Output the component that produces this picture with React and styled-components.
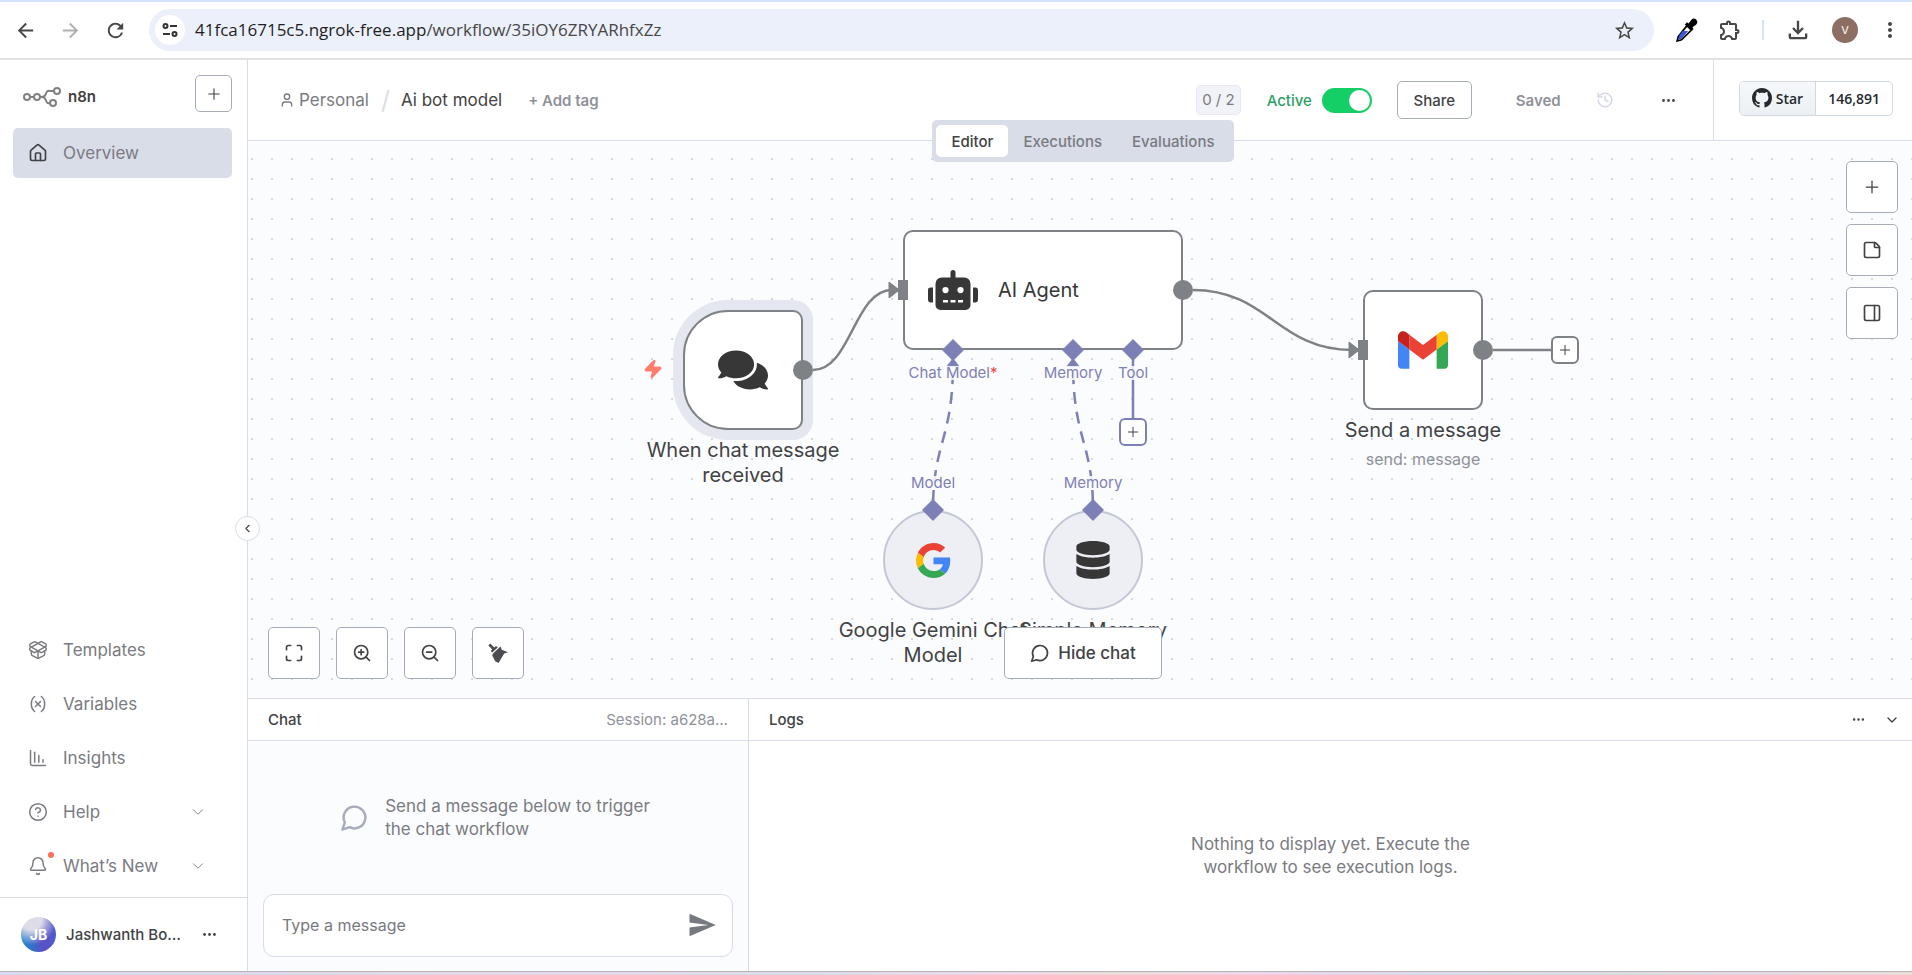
import React from 'react';
import styled, { createGlobalStyle } from 'styled-components';
import {
  House, PackageOpen, Variable, ChartColumnDecreasing, CircleQuestionMark, Bell, ChevronDown, ChevronLeft,
  Plus, User, History, StickyNote, PanelRight, Maximize, ZoomIn, ZoomOut, Ellipsis, Zap,
} from 'lucide-react';
import { FaRobot, FaComments, FaDatabase } from 'react-icons/fa';
import {
  MdArrowBack, MdArrowForward, MdRefresh, MdStarBorder, MdOutlineExtension, MdOutlineFileDownload, MdMoreVert, MdSend,
} from 'react-icons/md';

const c = {
  text: '#414244',
  soft: '#7a7b81',
  mute: '#8f9199',
  line: '#d9dce8',
  control: '#a6acba',
  edge: '#7e8186',
  purple: '#7d80b5',
  canvas: '#fbfcfe',
};

const Global = createGlobalStyle`
  *, *::before, *::after { box-sizing: border-box; }
  body { margin: 0; background: #fff; color: ${c.text}; font-family: Inter, "Liberation Sans", sans-serif; }
  button, input { font: inherit; color: inherit; }
  button { cursor: pointer; padding: 0; border: 0; background: none; }
  a { color: inherit; text-decoration: none; }
  h1, h2, p { margin: 0; font-weight: inherit; font-size: inherit; }
  svg { flex: none; display: block; }
`;

const Page = styled.div`
  min-height: 100vh;
  display: flex;
  flex-direction: column;
`;

/* Browser bar */
const BrowserTop = styled.div`
  height: 2px;
  background: #d3e3fd;
`;
const BrowserBar = styled.header`
  height: 58px;
  display: flex;
  align-items: center;
  gap: 22px;
  padding: 0 10px 0 14px;
  border-bottom: 2px solid #e1e1e1;
  color: #474747;
`;
const NavButtons = styled.nav`
  display: flex;
  gap: 22px;
`;
const IconButton = styled.button`
  display: flex;
  align-items: center;
  justify-content: center;
  color: ${(p) => p.$color || 'inherit'};
`;
const AddressBar = styled.div`
  flex: 1;
  height: 42px;
  display: flex;
  align-items: center;
  gap: 10px;
  padding: 0 18px 0 6px;
  border-radius: 21px;
  background: #ecf0fa;
`;
const SiteInfo = styled.button`
  width: 30px;
  height: 30px;
  display: grid;
  place-items: center;
  border-radius: 50%;
  background: #fff;
`;
const Url = styled.div`
  flex: 1;
  font: 17px/24px "Open Sans", "Noto Sans", sans-serif;
  color: #474747;
  b { font-weight: 400; color: #1f1f1f; }
`;
const BrowserTools = styled.div`
  display: flex;
  align-items: center;
  gap: 20px;
`;
const ToolRule = styled.span`
  width: 2px;
  height: 20px;
  background: #d3e3fd;
`;
const Profile = styled.button`
  width: 26px;
  height: 26px;
  border-radius: 50%;
  background: #8d6e63;
  color: #fff;
  font-size: 11px;
`;

/* Shell */
const Shell = styled.div`
  flex: 1;
  display: flex;
  position: relative;
`;
const Sidebar = styled.aside`
  width: 248px;
  flex: none;
  display: flex;
  flex-direction: column;
  border-right: 1px solid ${c.line};
`;
const SideTop = styled.div`
  display: flex;
  align-items: center;
  justify-content: space-between;
  padding: 15px 15px 16px 23px;
`;
const Brand = styled.a`
  display: flex;
  align-items: center;
  gap: 7px;
  padding-top: 6px;
  font-size: 15px;
  font-weight: 600;
`;
const AddButton = styled.button`
  width: 37px;
  height: 37px;
  display: grid;
  place-items: center;
  border: 1px solid ${c.control};
  border-radius: 5px;
`;
const Menu = styled.nav`
  display: flex;
  flex-direction: column;
  gap: 4px;
  margin-top: ${(p) => (p.$bottom ? 'auto' : '0')};
  padding: 0 15px 6px 13px;
`;
const MenuItem = styled.a`
  height: 50px;
  display: flex;
  align-items: center;
  gap: 15px;
  padding: 0 25px 0 15px;
  border-radius: 5px;
  background: ${(p) => (p.$active ? '#d9dde8' : 'transparent')};
  color: ${c.soft};
  font-size: 17px;
  > svg:first-child { color: ${(p) => (p.$active ? c.text : 'inherit')}; }
  span { flex: 1; }
`;
const BellWrap = styled.i`
  position: relative;
  &::after {
    content: '';
    position: absolute;
    top: -4px;
    right: -6px;
    width: 6px;
    height: 6px;
    border-radius: 50%;
    background: #ff6d5a;
  }
`;
const Account = styled.div`
  height: 74px;
  display: flex;
  align-items: center;
  gap: 10px;
  padding: 0 29px 0 21px;
  border-top: 1px solid ${c.line};
  font-size: 15px;
  font-weight: 500;
`;
const Avatar = styled.span`
  width: 35px;
  height: 35px;
  display: grid;
  place-items: center;
  border-radius: 50%;
  background: radial-gradient(circle at 30% 8%, #dedce8 25%, transparent 62%), linear-gradient(80deg, #1f82cf 15%, #5c4fc4 55%, #4a5fd0);
  color: #fff;
  font-size: 14px;
  font-weight: 700;
`;
const AccountName = styled.span`
  flex: 1;
  white-space: nowrap;
`;
const Collapse = styled.button`
  position: absolute;
  left: 235px;
  top: 456px;
  z-index: 2;
  width: 25px;
  height: 25px;
  display: grid;
  place-items: center;
  border: 1px solid ${c.line};
  border-radius: 50%;
  background: #fff;
`;

const Main = styled.main`
  flex: 1;
  min-width: 0;
  display: flex;
  flex-direction: column;
`;

/* Workflow header */
const Header = styled.header`
  height: 81px;
  display: flex;
  position: relative;
  z-index: 1;
  border-bottom: 1px solid ${c.line};
`;
const HeaderMain = styled.div`
  flex: 1;
  display: flex;
  align-items: center;
  padding: 0 36px 0 31px;
`;
const Crumbs = styled.div`
  flex: 1;
  display: flex;
  align-items: center;
  font-size: 17px;
`;
const CrumbLink = styled.a`
  display: flex;
  align-items: center;
  gap: 4px;
  color: ${c.soft};
`;
const Slash = styled.span`
  padding: 0 11px 0 12px;
  color: ${c.line};
  font-size: 25px;
  line-height: 28px;
`;
const AddTag = styled.button`
  margin-left: 26px;
  color: ${c.mute};
  font-size: 15px;
  font-weight: 600;
`;
const Actions = styled.div`
  display: flex;
  align-items: center;
  font-size: 15px;
`;
const Count = styled.span`
  height: 30px;
  padding: 0 5px;
  border: 1px solid #e6e9f2;
  border-radius: 5px;
  background: #f1f3f9;
  color: ${c.soft};
  font-size: 15px;
  line-height: 28px;
`;
const Active = styled.label`
  display: flex;
  align-items: center;
  gap: 10px;
  margin: 0 25px 0 26px;
  color: #2c9f66;
  font-weight: 500;
`;
const Switch = styled.input`
  appearance: none;
  width: 50px;
  height: 25px;
  margin: 0;
  padding: 2px;
  border-radius: 13px;
  background: #14cf66;
  &::after {
    content: '';
    display: block;
    width: 21px;
    height: 21px;
    margin-left: auto;
    border-radius: 50%;
    background: #fff;
  }
`;
const Share = styled.button`
  width: 75px;
  height: 38px;
  border: 1px solid ${c.control};
  border-radius: 5px;
  font-weight: 500;
`;
const Saved = styled.span`
  margin: 0 35px 0 44px;
  color: ${c.mute};
  font-weight: 600;
`;
const HistoryButton = styled(IconButton)`
  margin-right: 46px;
  color: #d5d9e6;
`;
const GithubArea = styled.div`
  display: flex;
  align-items: center;
  padding: 0 19px 4px 25px;
  border-left: 1px solid ${c.line};
`;
const Github = styled.a`
  height: 35px;
  display: flex;
  border: 1px solid #d1d9e0;
  border-radius: 5px;
  color: #25292e;
  font: 600 14px/33px "Open Sans", "Noto Sans", sans-serif;
  overflow: hidden;
`;
const GithubPart = styled.span`
  display: flex;
  align-items: center;
  gap: 4px;
  padding: 0 12px;
  &:first-child { border-right: 1px solid #d1d9e0; background: linear-gradient(#f6f8fa, #ebf0f4); }
`;
const Tabs = styled.div`
  position: absolute;
  left: 6px;
  right: 0;
  top: 60px;
  display: flex;
  justify-content: center;
  pointer-events: none;
`;
const TabList = styled.div`
  display: flex;
  padding: 5px 4px;
  border-radius: 5px;
  background: #d9dde8;
  pointer-events: auto;
`;
const Tab = styled.button`
  height: 32px;
  padding: 0 15px;
  border-radius: 5px;
  background: ${(p) => (p.$on ? '#fff' : 'transparent')};
  color: ${(p) => (p.$on ? c.text : c.soft)};
  font-size: 15px;
  font-weight: 500;
`;

/* Canvas */
const Canvas = styled.section`
  flex: 1;
  min-height: 557px;
  position: relative;
  overflow: hidden;
  background: radial-gradient(circle at 50% 50%, #d6d7db 1px, transparent 1px) -6px 8px / 20px 20px ${c.canvas};
`;
const Edges = styled.svg`
  position: absolute;
  left: 0;
  top: 0;
`;
const Node = styled.article`
  position: absolute;
  left: ${(p) => p.$x}px;
  top: ${(p) => p.$y}px;
  width: ${(p) => p.$w || 120}px;
  height: ${(p) => p.$h || 120}px;
  display: flex;
  align-items: center;
  justify-content: ${(p) => (p.$wide ? 'flex-start' : 'center')};
  gap: 20px;
  padding-left: ${(p) => (p.$wide ? '23px' : '0')};
  border: 2px solid ${(p) => (p.$round ? '#c3c8d7' : c.edge)};
  border-radius: ${(p) => (p.$round ? '50%' : p.$trigger ? '45px 10px 10px 45px' : '10px')};
  background: ${(p) => (p.$round ? '#eeeff5' : '#fff')};
  box-shadow: ${(p) => (p.$trigger ? '0 0 0 10px #e4e7ef' : 'none')};
  color: #373737;
  font-size: 20px;
`;
const Caption = styled.div`
  position: absolute;
  left: ${(p) => p.$x - 110}px;
  top: ${(p) => p.$y}px;
  width: 220px;
  font-size: 20px;
  line-height: 25px;
  text-align: center;
  small { display: block; margin-top: 4px; color: ${c.mute}; font-size: 16px; line-height: 24px; font-weight: 400; }
`;
const Port = styled.span`
  position: absolute;
  left: ${(p) => p.$x - 60}px;
  top: ${(p) => p.$y - 9}px;
  width: 120px;
  display: flex;
  justify-content: center;
  color: ${c.purple};
  font-size: 15px;
  line-height: 18px;
  span { background: rgba(251, 252, 254, 0.85); line-height: 14px; margin: 2px 0; }
  em { font-style: normal; color: #f0413f; }
`;
const PlusNode = styled.button`
  position: absolute;
  left: ${(p) => p.$x}px;
  top: ${(p) => p.$y}px;
  width: 28px;
  height: 28px;
  display: grid;
  place-items: center;
  border: 2px solid ${(p) => p.$color};
  border-radius: 6px;
  background: #fff;
`;
const BoltMark = styled.span`
  position: absolute;
  left: 395px;
  top: 218px;
  color: #ff7c6c;
`;
const ControlBar = styled.div`
  position: absolute;
  left: 20px;
  bottom: 19px;
  display: flex;
  gap: 16px;
`;
const SideControls = styled.div`
  position: absolute;
  right: 14px;
  top: 20px;
  display: flex;
  flex-direction: column;
  gap: 11px;
`;
const SquareButton = styled.button`
  width: 52px;
  height: 52px;
  display: grid;
  place-items: center;
  border: 1px solid ${c.control};
  border-radius: 5px;
  background: #fff;
`;
const HideChatRow = styled.div`
  position: absolute;
  left: 6px;
  right: 0;
  bottom: 19px;
  display: flex;
  justify-content: center;
  pointer-events: none;
`;
const HideChat = styled.button`
  height: 52px;
  display: flex;
  align-items: center;
  gap: 8px;
  padding: 0 25px;
  border: 1px solid ${c.control};
  border-radius: 5px;
  background: #fff;
  font-size: 17px;
  font-weight: 500;
  pointer-events: auto;
`;

/* Bottom panels */
const Panels = styled.section`
  min-height: 273px;
  display: flex;
  border-top: 1px solid ${c.line};
`;
const ChatPanel = styled.div`
  width: 501px;
  flex: none;
  display: flex;
  flex-direction: column;
  border-right: 1px solid ${c.line};
  background: ${c.canvas};
`;
const LogPanel = styled.div`
  flex: 1;
  display: flex;
  flex-direction: column;
`;
const PanelHead = styled.header`
  height: 42px;
  display: flex;
  align-items: center;
  gap: 18px;
  padding: 0 12px 0 20px;
  border-bottom: 1px solid ${c.line};
  background: #fff;
  font-size: 15px;
  font-weight: 500;
  h2 { flex: 1; }
`;
const Session = styled.span`
  padding-right: 8px;
  color: ${c.mute};
  font-weight: 400;
`;
const Hint = styled.div`
  flex: 1;
  display: flex;
  align-items: center;
  justify-content: center;
  gap: 16px;
  padding-right: ${(p) => (p.$center ? '0' : '6px')};
  color: ${c.soft};
  font-size: 17px;
  line-height: 23px;
  text-align: ${(p) => (p.$center ? 'center' : 'left')};
  > svg { color: ${c.control}; }
`;
const Composer = styled.form`
  height: 63px;
  display: flex;
  align-items: center;
  margin: 0 15px 14px;
  padding: 0 15px 2px 18px;
  border: 1px solid ${c.line};
  border-radius: 11px;
  background: #fff;
  color: #777980;
`;
const MessageInput = styled.input`
  flex: 1;
  border: 0;
  outline: 0;
  padding: 0;
  background: none;
  font-size: 16px;
  &::placeholder { color: #777980; }
`;
const BottomStrip = styled.div`
  height: 4px;
  border-top: 1px solid #b4b4b8;
  background: linear-gradient(90deg, #d8d9ee, #e4d8ea 30%, #dcdcec 42%, #efd6e8 53%, #ecdcd8 58%, #efd4ea 66%, #dcdaee 75%, #dcdce0 85%, #e6d8e4 93%, #ecdcd8);
`;

const ChatIcon = ({ size }) => (
  <svg width={size} height={size} viewBox="0 0 24 24" fill="none" stroke="currentColor" strokeWidth="2" strokeLinecap="round" strokeLinejoin="round">
    <path d="M7.9 20A9 9 0 1 0 4 16.1L2 22Z" />
  </svg>
);
const N8nLogo = () => (
  <svg width="38" height="21" viewBox="0 0 38 21" fill="none" stroke="#808080" strokeWidth="2">
    <circle cx="4" cy="11" r="3" /><circle cx="14" cy="11" r="3" />
    <circle cx="34" cy="5" r="3" /><circle cx="30" cy="17" r="3" />
    <path d="M7 11h4M17 11h2q3 0 4-3.500t4-2.500h4M19 11q3 0 4 3.500t4 2.500" />
  </svg>
);
const SiteIcon = () => (
  <svg width="16" height="16" viewBox="0 0 16 16" fill="none" stroke="#333" strokeWidth="2">
    <circle cx="3.5" cy="4" r="2" /><path d="M8 4h7M1 12h7" /><circle cx="12.5" cy="12" r="2" />
  </svg>
);
const GithubMark = () => (
  <svg width="20" height="20" viewBox="0 0 16 16" fill="currentColor">
    <path d="M8 0c4.420 0 8 3.580 8 8a8.013 8.013 0 0 1-5.450 7.590c-.4.080-.55-.17-.55-.38 0-.27.010-1.130.010-2.200 0-.75-.25-1.230-.54-1.480 1.780-.2 3.650-.88 3.650-3.950 0-.88-.31-1.590-.82-2.150.080-.2.360-1.020-.080-2.120 0 0-.67-.22-2.200.82-.64-.18-1.320-.27-2-.27-.68 0-1.360.090-2 .27-1.530-1.030-2.200-.82-2.200-.82-.44 1.100-.16 1.920-.080 2.120-.51.560-.82 1.280-.82 2.150 0 3.060 1.860 3.750 3.640 3.950-.23.200-.44.550-.51 1.070-.46.210-1.610.550-2.330-.66-.15-.24-.6-.83-1.230-.82-.67.010-.27.380.010.530.34.190.730.900.820 1.130.16.450.68 1.310 2.690.940 0 .67.010 1.300.010 1.490 0 .21-.15.450-.55.380A7.995 7.995 0 0 1 0 8c0-4.420 3.580-8 8-8Z" />
  </svg>
);
const Dropper = () => (
  <svg width="22" height="24" viewBox="0 0 20 22">
    <path d="M10 7l4 4-9 9-4 1 1-4z" fill="#fff" stroke="#000" strokeWidth="1.6" />
    <path d="M6 12h5l-6 7-3 1 1-4z" fill="#3c55d8" />
    <path d="M8 6l2-2 1.500 1 2.500-3.500q2.500-2 4.500 0t0 4.500l-3.500 2.500 1 1.500L14 12z" fill="#000" />
  </svg>
);
const GmailIcon = () => (
  <svg width="50" height="38" viewBox="52 42 88 66">
    <path fill="#4285f4" d="M58 108h14V74L52 59v43c0 3.320 2.690 6 6 6" />
    <path fill="#34a853" d="M120 108h14c3.320 0 6-2.690 6-6V59l-20 15" />
    <path fill="#fbbc04" d="M120 48v26l20-15v-8c0-7.420-8.470-11.650-14.400-7.200" />
    <path fill="#ea4335" d="M72 74V48l24 18 24-18v26L96 92" />
    <path fill="#c5221f" d="M52 51v8l20 15V48l-5.600-4.200c-5.940-4.450-14.400-.22-14.400 7.200" />
  </svg>
);
const GoogleIcon = () => (
  <svg width="35" height="35" viewBox="0 0 48 48">
    <path fill="#ea4335" d="M24 9.500c3.540 0 6.710 1.220 9.210 3.600l6.850-6.850C35.900 2.380 30.470 0 24 0 14.620 0 6.510 5.380 2.560 13.220l7.980 6.190C12.430 13.720 17.740 9.500 24 9.500z" />
    <path fill="#4285f4" d="M46.980 24.550c0-1.570-.15-3.090-.38-4.550H24v9.020h12.940c-.58 2.960-2.260 5.480-4.780 7.180l7.730 6c4.510-4.180 7.090-10.360 7.090-17.650z" />
    <path fill="#fbbc05" d="M10.530 28.590c-.48-1.450-.76-2.990-.76-4.590s.27-3.140.76-4.590l-7.980-6.190C.92 16.460 0 20.120 0 24c0 3.880.92 7.540 2.560 10.780l7.970-6.190z" />
    <path fill="#34a853" d="M24 48c6.480 0 11.930-2.130 15.890-5.810l-7.730-6c-2.150 1.450-4.920 2.300-8.160 2.300-6.260 0-11.570-4.220-13.470-9.910l-7.980 6.190C6.510 42.620 14.620 48 24 48z" />
  </svg>
);
const Broom = () => (
  <svg width="20" height="20" viewBox="0 0 20 20" fill="#4c4d50">
    <path d="M2.200.6L6.300 4.500 8 3l1.800 1.500-5.600 5L2.700 8l1.500-1.500L.4 2.600z" />
    <path d="M10.600 5.200L12.500 3.600l1.300 3.200L20 9.200l-3.800 1.300L10.500 20l-3.300-1.800-3-5.800.8-2z" />
  </svg>
);

const Diamond = ({ x, y }) => <path d={`M${x} ${y - 11}l11 11-11 11-11-11z`} fill={c.purple} />;

const menu = [
  { label: 'Templates', Icon: PackageOpen },
  { label: 'Variables', Icon: Variable },
  { label: 'Insights', Icon: ChartColumnDecreasing },
  { label: 'Help', Icon: CircleQuestionMark, more: true },
  { label: 'What’s New', Icon: Bell, more: true, dot: true },
];

function Browser() {
  return (
    <>
      <BrowserTop />
      <BrowserBar>
        <NavButtons>
          <IconButton aria-label="Back"><MdArrowBack size={23} /></IconButton>
          <IconButton aria-label="Forward" $color="#b0b0b0"><MdArrowForward size={23} /></IconButton>
          <IconButton aria-label="Reload"><MdRefresh size={23} /></IconButton>
        </NavButtons>
        <AddressBar>
          <SiteInfo aria-label="Site information"><SiteIcon /></SiteInfo>
          <Url><b>41fca16715c5.ngrok-free.app</b>/workflow/35iOY6ZRYARhfxZz</Url>
          <IconButton aria-label="Bookmark"><MdStarBorder size={23} /></IconButton>
        </AddressBar>
        <BrowserTools>
          <IconButton aria-label="Colour picker"><Dropper /></IconButton>
          <IconButton aria-label="Extensions"><MdOutlineExtension size={24} /></IconButton>
          <ToolRule />
          <IconButton aria-label="Downloads"><MdOutlineFileDownload size={28} /></IconButton>
          <Profile>V</Profile>
          <IconButton aria-label="Menu"><MdMoreVert size={24} /></IconButton>
        </BrowserTools>
      </BrowserBar>
    </>
  );
}

function Side() {
  return (
    <Sidebar>
      <SideTop>
        <Brand href="#"><N8nLogo />n8n</Brand>
        <AddButton aria-label="Create"><Plus size={18} strokeWidth={1.5} /></AddButton>
      </SideTop>
      <Menu>
        <MenuItem href="#" $active><House size={20} /><span>Overview</span></MenuItem>
      </Menu>
      <Menu $bottom>
        {menu.map(({ label, Icon, more, dot }) => (
          <MenuItem key={label} href="#">
            {dot ? <BellWrap><Icon size={20} strokeWidth={1.8} /></BellWrap> : <Icon size={20} strokeWidth={1.8} />}
            <span>{label}</span>
            {more && <ChevronDown size={18} strokeWidth={1.2} />}
          </MenuItem>
        ))}
      </Menu>
      <Account>
        <Avatar>JB</Avatar>
        <AccountName>Jashwanth Bo…</AccountName>
        <IconButton aria-label="Account menu"><Ellipsis size={17} /></IconButton>
      </Account>
    </Sidebar>
  );
}

function WorkflowHeader() {
  return (
    <Header>
      <HeaderMain>
        <Crumbs>
          <CrumbLink href="#"><User size={16} />Personal</CrumbLink>
          <Slash>/</Slash>
          <h1>Ai bot model</h1>
          <AddTag>+ Add tag</AddTag>
        </Crumbs>
        <Actions>
          <Count>0 / 2</Count>
          <Active>Active<Switch type="checkbox" role="switch" defaultChecked /></Active>
          <Share>Share</Share>
          <Saved>Saved</Saved>
          <HistoryButton aria-label="Workflow history"><History size={18} /></HistoryButton>
          <IconButton aria-label="Workflow menu"><Ellipsis size={17} /></IconButton>
        </Actions>
      </HeaderMain>
      <GithubArea>
        <Github href="#">
          <GithubPart><GithubMark />Star</GithubPart>
          <GithubPart>146,891</GithubPart>
        </Github>
      </GithubArea>
      <Tabs>
        <TabList role="tablist">
          <Tab role="tab" $on>Editor</Tab>
          <Tab role="tab">Executions</Tab>
          <Tab role="tab">Evaluations</Tab>
        </TabList>
      </Tabs>
    </Header>
  );
}

function Flow() {
  return (
    <Canvas>
      <Edges width="1400" height="557">
        <g fill="none" stroke={c.edge} strokeWidth="2.500">
          <path d="M565 229C603 229 606 149 644 149" />
          <path d="M945 149C1020 149 1030 209 1104 209" />
          <path d="M1245 209H1304" />
        </g>
        <g fill="none" stroke={c.purple} strokeWidth="2.500" strokeDasharray="12 8" strokeDashoffset="12">
          <path d="M685 369C685 300 705 300 705 221" />
          <path d="M845 369C845 300 825 300 825 221" />
        </g>
        <path d="M885 219V278" stroke={c.purple} strokeWidth="2.500" />
      </Edges>
      <Node $x={435} $y={169} $trigger><FaComments size={50} /></Node>
      <Node $x={655} $y={89} $w={280} $wide><FaRobot size={50} />AI Agent</Node>
      <Node $x={1115} $y={149}><GmailIcon /></Node>
      <Node $x={635} $y={369} $w={100} $h={100} $round><GoogleIcon /></Node>
      <Node $x={795} $y={369} $w={100} $h={100} $round><FaDatabase size={38} /></Node>
      <Edges width="1400" height="557">
        <g fill={c.edge}>
          <circle cx="555" cy="229" r="10" /><circle cx="935" cy="149" r="10" /><circle cx="1235" cy="209" r="10" />
          <path d="M650 139h10v20h-10zM1110 199h10v20h-10z" />
          <path d="M641 141l9 7v2l-9 7zM1101 201l9 7v2l-9 7z" stroke={c.edge} strokeLinejoin="round" />
        </g>
        <path d="M705 217l7 9h-14zM825 217l7 9h-14z" fill={c.purple} />
        <Diamond x={705} y={209} /><Diamond x={825} y={209} /><Diamond x={885} y={209} />
        <Diamond x={685} y={369} /><Diamond x={845} y={369} />
      </Edges>
      <BoltMark><Zap size={20} fill="currentColor" /></BoltMark>
      <Port $x={705} $y={232}><span>Chat Model<em>*</em></span></Port>
      <Port $x={825} $y={232}><span>Memory</span></Port>
      <Port $x={885} $y={232}><span>Tool</span></Port>
      <Port $x={685} $y={342}><span>Model</span></Port>
      <Port $x={845} $y={342}><span>Memory</span></Port>
      <PlusNode $x={871} $y={277} $color={c.purple} aria-label="Add tool"><Plus size={16} strokeWidth={1.5} /></PlusNode>
      <PlusNode $x={1303} $y={195} $color={c.edge} aria-label="Add node"><Plus size={16} strokeWidth={1.5} /></PlusNode>
      <Caption $x={495} $y={297}>When chat message received</Caption>
      <Caption $x={1175} $y={277}>Send a message<small>send: message</small></Caption>
      <Caption $x={685} $y={477}>Google Gemini Chat Model</Caption>
      <Caption $x={845} $y={477}>Simple Memory</Caption>
      <ControlBar>
        <SquareButton aria-label="Fit view"><Maximize size={20} /></SquareButton>
        <SquareButton aria-label="Zoom in"><ZoomIn size={20} /></SquareButton>
        <SquareButton aria-label="Zoom out"><ZoomOut size={20} /></SquareButton>
        <SquareButton aria-label="Tidy up"><Broom /></SquareButton>
      </ControlBar>
      <SideControls>
        <SquareButton aria-label="Add node"><Plus size={20} strokeWidth={1.5} /></SquareButton>
        <SquareButton aria-label="Add sticky note"><StickyNote size={20} /></SquareButton>
        <SquareButton aria-label="Toggle panel"><PanelRight size={20} /></SquareButton>
      </SideControls>
      <HideChatRow><HideChat><ChatIcon size={20} />Hide chat</HideChat></HideChatRow>
    </Canvas>
  );
}

export default function App() {
  return (
    <Page>
      <Global />
      <Browser />
      <Shell>
        <Side />
        <Collapse aria-label="Collapse sidebar"><ChevronLeft size={13} /></Collapse>
        <Main>
          <WorkflowHeader />
          <Flow />
          <Panels>
            <ChatPanel>
              <PanelHead><h2>Chat</h2><Session>Session: a628a…</Session></PanelHead>
              <Hint><ChatIcon size={29} /><p>Send a message below to trigger<br />the chat workflow</p></Hint>
              <Composer>
                <MessageInput aria-label="Message" placeholder="Type a message" />
                <IconButton type="button" aria-label="Send"><MdSend size={30} /></IconButton>
              </Composer>
            </ChatPanel>
            <LogPanel>
              <PanelHead>
                <h2>Logs</h2>
                <IconButton aria-label="Log options"><Ellipsis size={15} /></IconButton>
                <IconButton aria-label="Close logs"><ChevronDown size={16} /></IconButton>
              </PanelHead>
              <Hint $center><p>Nothing to display yet. Execute the<br />workflow to see execution logs.</p></Hint>
            </LogPanel>
          </Panels>
        </Main>
      </Shell>
      <BottomStrip />
    </Page>
  );
}
